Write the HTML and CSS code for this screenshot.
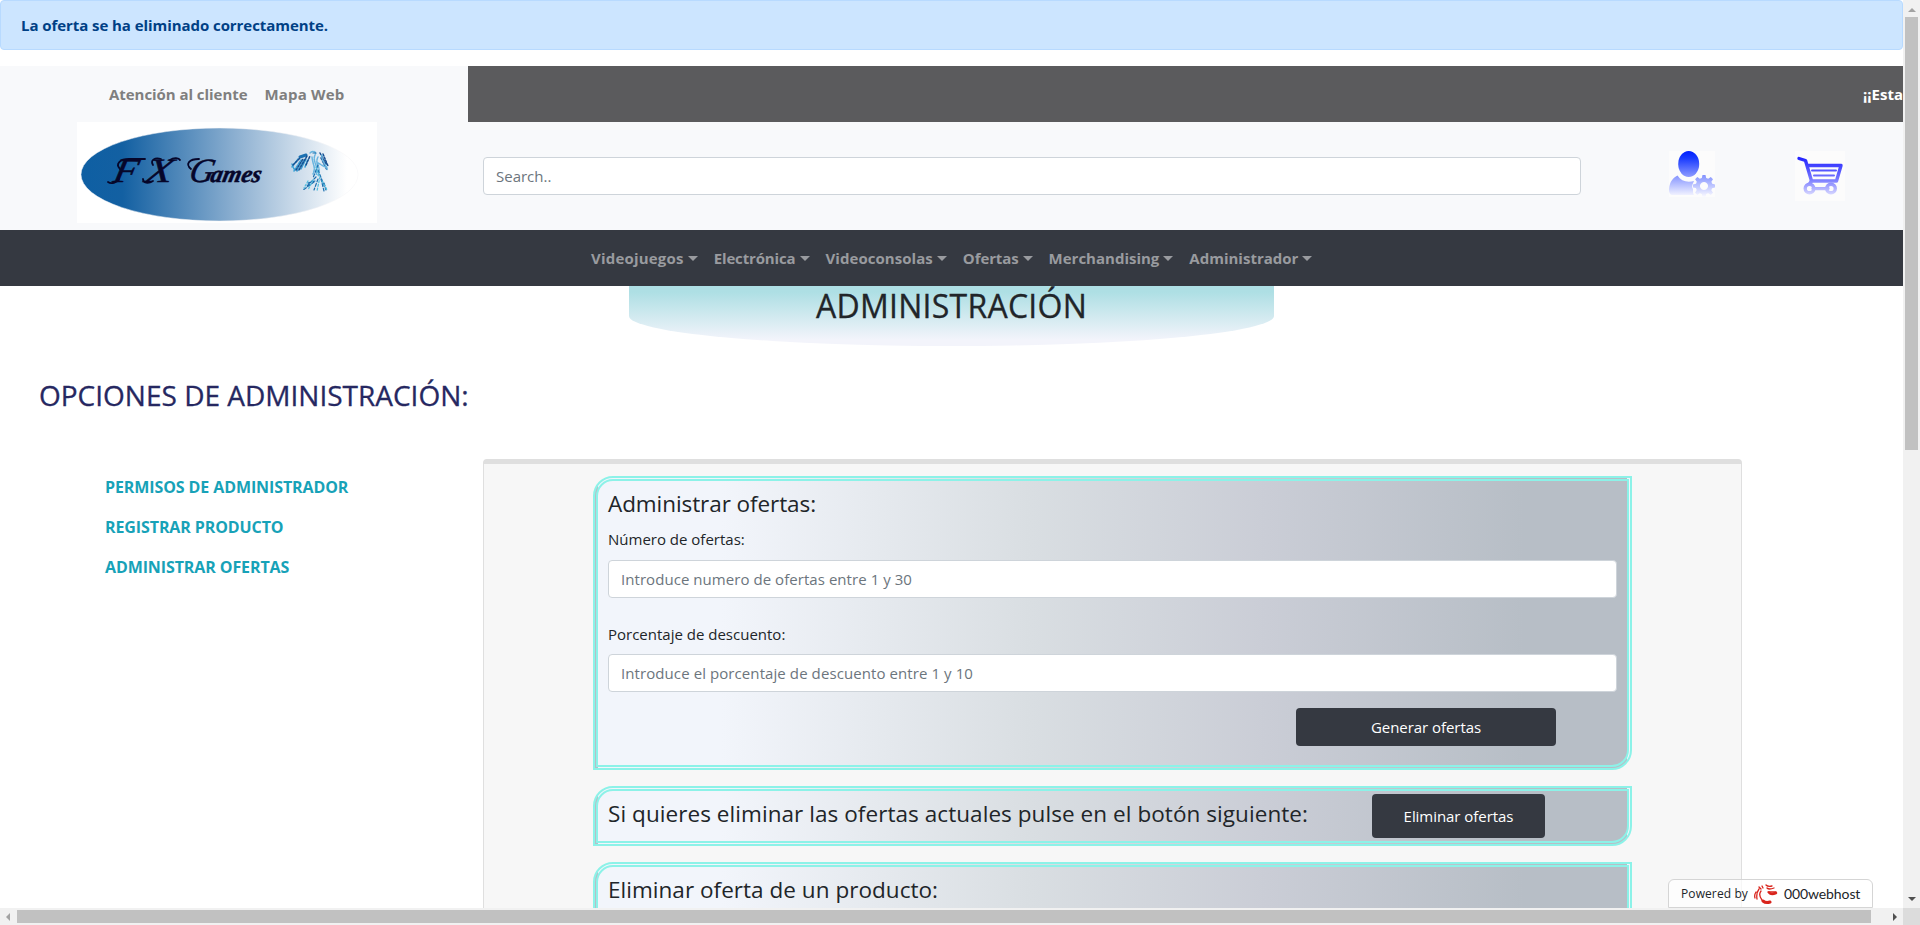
FILE: index.html
```html
<!DOCTYPE html>
<html lang="es">
<head>
<meta charset="utf-8">
<title>FX Games - Administración</title>
<link rel="stylesheet" href="styles.css">
</head>
<body>
<div class="screen">
<div class="page">
  <div class="alert"><span class="t-alert">La oferta se ha eliminado correctamente.</span></div>
  <header class="header">
    <div class="top-row">
      <div class="top-links"><a class="t-top">Atención al cliente</a><a class="t-top2">Mapa Web</a></div>
      <div class="marquee"><span class="t-marq">¡¡Esta</span></div>
    </div>
    <div class="brand-row">
      <div class="logo">
        <svg width="300" height="101" viewBox="0 0 300 101">
          <defs>
            <linearGradient id="lg"><stop offset="0" stop-color="#0e5fa3"/><stop offset=".15" stop-color="#1360a2"/><stop offset=".55" stop-color="#8aaed0"/><stop offset=".96" stop-color="#fff"/></linearGradient>
          </defs>
          <rect width="300" height="101" fill="#fff"/>
          <ellipse cx="142.500" cy="52.500" rx="138.500" ry="46.500" fill="url(#lg)" stroke="#f4f4f6" stroke-width=".5"/>
          <g class="logo-text">
            <text transform="translate(35 60) skewX(-12)" font-size="34" textLength="24" lengthAdjust="spacingAndGlyphs">F</text>
            <text transform="translate(67 60) skewX(-12)" font-size="34" textLength="27" lengthAdjust="spacingAndGlyphs">X</text>
            <text transform="translate(111 60) skewX(-12)"><tspan font-size="34">G</tspan><tspan font-size="24" font-weight="700" dx="-3">ames</tspan></text>
          </g>
          <g fill="none" stroke="#06062a" stroke-width="1.800" stroke-linecap="round">
            <path d="M43 47C38 42 43 37 52 37H68M42 57C40 61 34 62 31 60"/>
            <path d="M76 43C73 38 78 35 84 37M76 59C71 62 66 61 66 57M93 38C97 35 102 36 103 38"/>
            <path d="M114 47C108 42 112 37 122 37"/>
          </g>
          <g fill="none" stroke-width="1.500" stroke-linecap="round">
            <path stroke="#1b70b1" stroke-width="3" d="M223 35L229 33"/>
            <path stroke="#3aa2d6" stroke-dasharray="3 1.300" d="M215 45L221 37M217 49L224 38M220 49L227 38M224 47L229 37M228 45L231 37M215 42L217 47"/>
            <path stroke="#164e90" stroke-dasharray="2 1.500" d="M216 43L223 36M219 48L226 37M222 48L230 34M229 43L233 34M243 31L249 42M246 32L251 44M244 36L250 48"/>
            <path stroke="#69b5df" stroke-dasharray="3 1.200" d="M233 31C236 28 240 30 238 33C235 40 242 43 239 53M235 35C236 44 239 45 236 52M241 35C237 43 245 44 241 53M245 33C244 40 251 44 250 48M241 41L250 46"/>
            <path stroke="#1c70b0" stroke-width="1.200" stroke-dasharray="3 1.800" d="M236 31L240 31M241 43L236 56M239 55L229 65M237 60L226 68M241 57L237 68M244 57L247 69M241 48L249 68M231 61L238 59M247 61L249 67"/>
            <path stroke="#51bddd" stroke-width="1.200" stroke-dasharray="2 1.800" d="M231 59L227 66M236 58L231 68M243 55L240 69M245 59L250 68M239 45L242 54"/>
          </g>
        </svg>
      </div>
      <div class="search input"><span>Search..</span></div>
      <div class="icons">
      <svg class="user" width="46" height="46" viewBox="0 0 46 46">
        <defs><linearGradient id="ug" x2="0" y2="46" gradientUnits="userSpaceOnUse"><stop offset="0" stop-color="#0020ff"/><stop offset=".15" stop-color="#1739ff"/><stop offset=".55" stop-color="#8a98ff"/><stop offset="1" stop-color="#fbfbff"/></linearGradient></defs>
        <rect width="46" height="46" fill="#fcfcfc"/>
        <g fill="url(#ug)"><ellipse cx="19.700" cy="13" rx="10.500" ry="13"/>
        <path d="M8.500 24.500C12 30 18 32 25 30C24 33 22 35 24 38C24 41 24 43 25 44H4C1 44 0 42 0 38C1 30 4 27 8.500 24.500Z"/>
        <path fill-rule="evenodd" d="M33.500 24h3l.700 3 2 .800 2.600-1.700 2.200 2.200-1.600 2.500.800 2 2.900.700v3l-3 .700-.800 2 1.700 2.500-2.200 2.200-2.600-1.600-2 .800-.700 2.900h-3l-.700-3-2-.800-2.500 1.700-2.200-2.200 1.600-2.600-.800-2-2.900-.600v-3l3-.700.800-2-1.700-2.600 2.200-2.200 2.500 1.700 2-.800zM35 31a4 4 0 1 0 .01 0z"/></g>
      </svg>
      <svg class="cart" width="50" height="50" viewBox="0 0 50 50">
        <defs><linearGradient id="cg" x2="0" y2="46" gradientUnits="userSpaceOnUse"><stop offset=".15" stop-color="#2424ff"/><stop offset=".6" stop-color="#7476ff"/><stop offset="1" stop-color="#e6e6ff"/></linearGradient></defs>
        <rect width="50" height="50" fill="#fcfcfc"/>
        <g fill="none" stroke="url(#cg)" stroke-width="3.400" stroke-linecap="round" stroke-linejoin="round">
        <path d="M4 7.500L10.500 9.500L16.500 30H41.500L46 14.500H12.500"/>
        <path stroke-width="2" d="M17 19.500H41.001L41 19.400M19 24.500H39V24.400"/>
        <path d="M18 37.600H33V37.500M16.500 30L14.500 33"/><circle cx="14.500" cy="37.500" r="4.300"/><circle cx="36" cy="37.500" r="4.300"/></g>
      </svg>
      </div>
    </div>
  </header>
  <nav class="nav">
    <a><span class="n1">Videojuegos</span><i class="caret"></i></a>
    <a><span class="n2">Electrónica</span><i class="caret"></i></a>
    <a><span class="n3">Videoconsolas</span><i class="caret"></i></a>
    <a><span class="n4">Ofertas</span><i class="caret"></i></a>
    <a><span>Merchandising</span><i class="caret"></i></a>
    <a><span>Administrador</span><i class="caret"></i></a>
  </nav>
  <div class="banner"><h1>ADMINISTRACIÓN</h1></div>
  <h2 class="section-title">OPCIONES DE ADMINISTRACIÓN:</h2>
  <main class="content">
    <aside class="side">
      <a>PERMISOS DE ADMINISTRADOR</a>
      <a>REGISTRAR PRODUCTO</a>
      <a>ADMINISTRAR OFERTAS</a>
    </aside>
    <section class="card">
      <div class="box box-form">
        <h4><span class="h4a">Administrar ofertas:</span></h4>
        <label>Número de ofertas:</label>
        <div class="input"><span class="p1">Introduce numero de ofertas entre 1 y 30</span></div>
        <label class="second">Porcentaje de descuento:</label>
        <div class="input"><span class="p2">Introduce el porcentaje de descuento entre 1 y 10</span></div>
        <button class="btn btn-gen">Generar ofertas</button>
      </div>
      <div class="box box-row">
        <h4 class="h4b">Si quieres eliminar las ofertas actuales pulse en el botón siguiente:</h4>
        <button class="btn btn-del">Eliminar ofertas</button>
      </div>
      <div class="box box-last"><h4><span class="h4c">Eliminar oferta de un producto:</span></h4></div>
    </section>
  </main>
  <div class="powered">
    <span class="pw">Powered by</span>
    <svg width="24" height="22" viewBox="0 0 24 22" fill="none" stroke="#d9241c" stroke-linecap="round"><path stroke-width="3" d="M9 18Q12 20.500 16 19"/><path stroke-width="2.500" d="M15 9.500Q17 12 22 10"/><path stroke-width="1.300" d="M22 9Q17 9 14 9M5 6Q2 10 3 16M7 8Q4 12 8 17M2 9Q0 12 1 15M13 5Q15 7 20 5M12 2Q14 4 18 3M8 3L9 5M5 4L7 6"/></svg>
    <span class="wh">000webhost</span>
  </div>
</div>
<div class="vbar"><i class="up"></i><div class="vthumb"></div><i class="down"></i></div>
<div class="hbar"><i class="left"></i><div class="hthumb"></div><i class="right"></i></div>
<div class="corner"></div>
</div>
</body>
</html>
```
FILE: styles.css
```css
* { box-sizing: border-box; }
body { margin: 0; font: 15px/24px "Open Sans", "Noto Sans", sans-serif; color: #212529; background: #fff; }
h1, h2, h4 { margin: 0; font-weight: 500; white-space: nowrap; }
span, .top-links a { white-space: nowrap; }
.screen { display: grid; grid-template: 908px 17px / 1903px 17px; width: 1920px; height: 925px; overflow: hidden; }
.page { position: relative; overflow: hidden; }

.alert { height: 50px; padding: 12px 20px; border: 1px solid #b8daff; border-radius: 4px; background: #cce5ff; color: #004085; font-weight: 700; }
.t-alert { letter-spacing: -.063px; }

.header { margin-top: 16px; background: #f8f9fb; }
.top-row { display: flex; height: 56px; }
.top-links { display: flex; gap: 17px; width: 468px; padding: 16px 0 0 109px; color: #7f7f7f; font-weight: 700; }
.t-top { letter-spacing: -.049px; }
.t-top2 { letter-spacing: .186px; }
.marquee { flex: 1; overflow: hidden; padding: 16px 0 0 1395px; background: #5b5b5d; color: #fff; font-weight: 700; }
.brand-row { display: flex; height: 108px; }
.logo { width: 483px; padding-left: 77px; }
.logo svg, .icons svg { display: block; }
.logo-text { font-family: "Liberation Serif", serif; font-style: italic; fill: #06062a; stroke: #06062a; stroke-width: .5px; }
.input { height: 38px; padding: 6px 12px; border: 1px solid #ced4da; border-radius: 4px; background: #fff; color: #6c757d; }
.search { width: 1098px; margin-top: 35px; }
.icons { display: flex; gap: 80px; padding: 29px 0 0 88px; }

.nav { display: flex; height: 56px; padding: 16px 0 0 583px; background: #353941; color: #999b9f; font-weight: 700; }
.nav a { display: flex; padding: 0 8px; }
.n1 { letter-spacing: .2px; }
.n2 { letter-spacing: -.14px; }
.n3 { letter-spacing: .05px; }
.n4 { letter-spacing: -.1px; }
.caret { margin: 10px 0 0 4px; border: 5px solid transparent; border-top-color: currentColor; border-bottom: 0; height: 0; }

.banner { width: 645px; height: 60px; margin-left: 629px; border-radius: 0 0 50% 50% / 0 0 30px 30px; background: linear-gradient(#aedfe4 10%, #f3f4fb 90%); text-align: center; }
h1 { font-size: 32px; line-height: 39px; letter-spacing: .25px; -webkit-text-stroke: .3px currentColor; }
.section-title { padding: 28px 0 0 39px; font-size: 28px; line-height: 42px; color: #262861; -webkit-text-stroke: .3px currentColor; }
.content { display: flex; margin-top: 43px; }
.side { display: flex; flex-direction: column; gap: 16px; width: 483px; padding: 16px 0 0 105px; color: #17a2b8; font-size: 16px; font-weight: 700; letter-spacing: -.1px; }

.card { width: 1259px; height: 600px; padding: 12px 109px 0 109px; border: 1px solid #dfdfdf; border-top: 5px solid #dfdfdf; border-radius: 4px; background: #f7f7f7; }
.box { width: 1039px; margin-bottom: 16px; border: 5px double #8cf2e8; border-radius: 20px 0; background: linear-gradient(to right, #f2f5fb 12%, #d9dee2 42%, #cacdd6 65%, #b7bec6 90%); padding: 8px 10px 0; }
.box-form { height: 294px; }
.box-row { display: flex; height: 60px; }
.box-last { height: 200px; }
h4 { font-size: 22.5px; line-height: 29px; font-weight: 400; }
.h4a { letter-spacing: -.078px; }
.h4b { width: 700px; letter-spacing: .062px; }
.h4c { letter-spacing: .032px; }
label { display: block; margin: 9px 0; line-height: 24px; }
label.second { margin: 24px 0 8px; }
.p1 { letter-spacing: .054px; }
.p2 { letter-spacing: .086px; }
.btn { display: block; border: 0; border-radius: 4px; padding: 0; background: #353941; color: #fff; font: inherit; letter-spacing: -.05px; }
.btn-gen { width: 260px; height: 38px; margin: 16px 0 0 688px; }
.btn-del { width: 173px; height: 44px; margin: -5px 0 0 64px; }

.powered { position: absolute; right: 30px; bottom: 0; display: flex; align-items: center; gap: 6px; width: 205px; height: 29px; padding-left: 12px; border: 1px solid #d5d5d5; border-radius: 6px 6px 0 0; background: rgba(255,255,255,.7); font-size: 12px; }
.pw { letter-spacing: .1px; }
.wh { font-family: Lato, sans-serif; font-size: 14px; letter-spacing: -.1px; }

.vbar { display: flex; flex-direction: column; align-items: center; background: #f1f1f1; }
.vthumb { width: 13px; height: 433px; background: #c1c1c1; margin: 5px 0 auto; }
.hbar { display: flex; align-items: center; background: #f1f1f1; }
.hthumb { width: 1854px; height: 13px; background: #c1c1c1; margin: 0 auto 0 7px; }
.corner { background: #dcdcdc; }
.vbar i, .hbar i { width: 0; height: 0; border: 4px solid transparent; }
.vbar .up { border-top: 0; border-bottom-color: #a3a3a3; margin-top: 8px; }
.vbar .down { border-bottom: 0; border-top-color: #505050; margin-bottom: 7px; }
.hbar .left { border-left: 0; border-right-color: #a3a3a3; margin-left: 6px; }
.hbar .right { border-right: 0; border-left-color: #505050; margin-right: 6px; }
```
